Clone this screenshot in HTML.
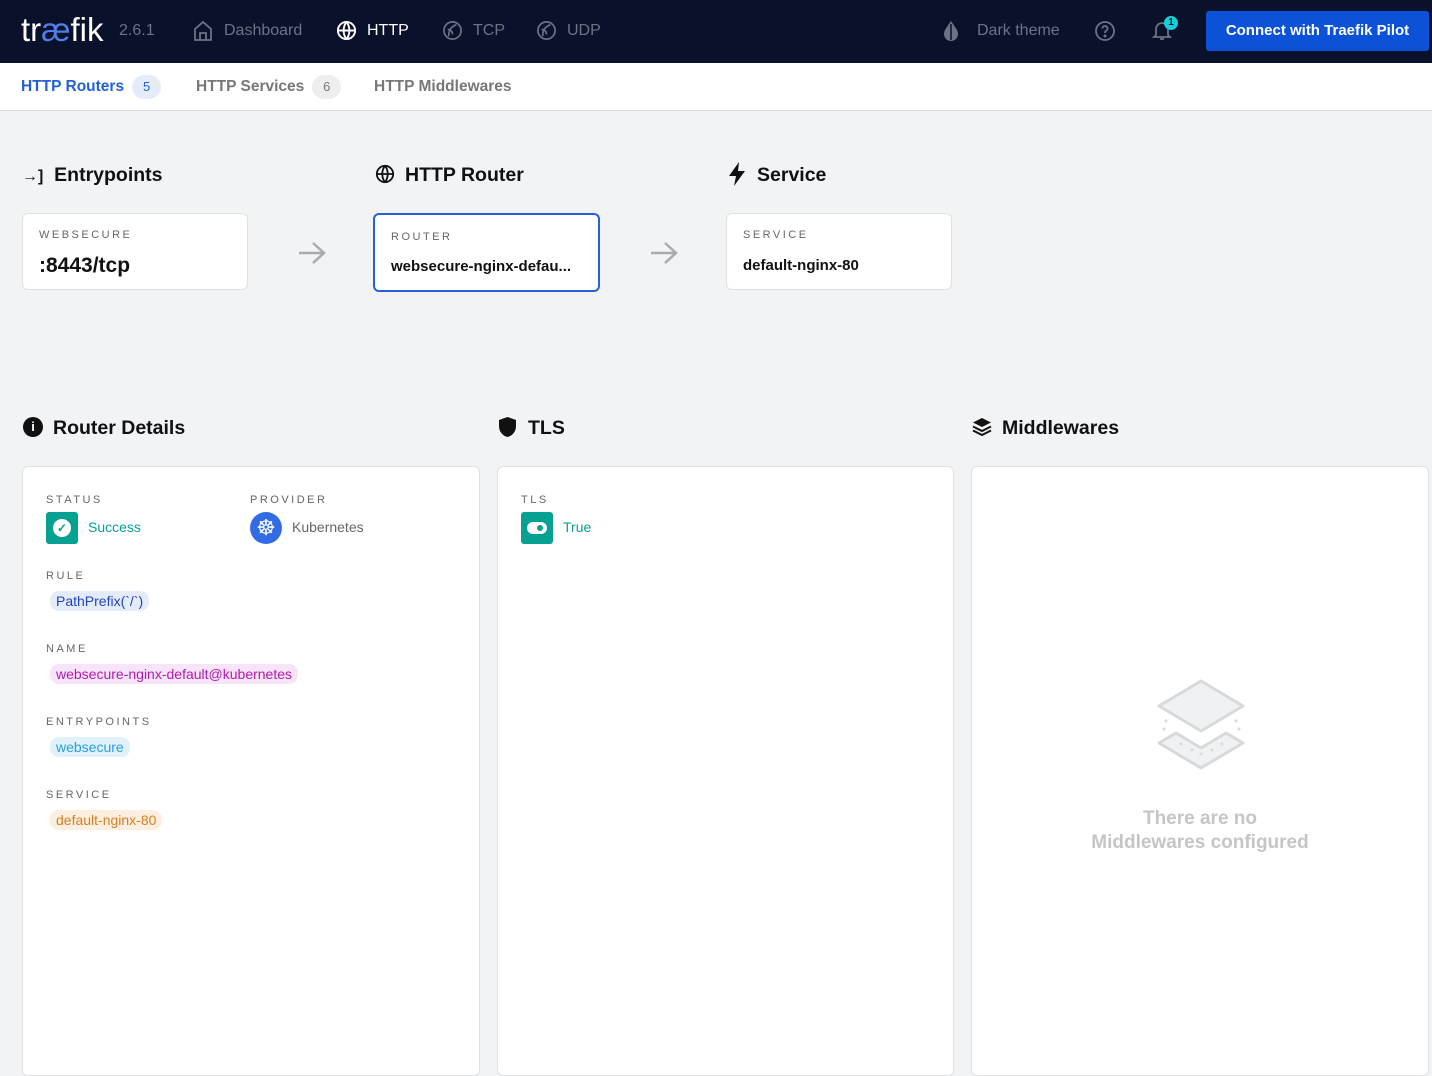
<!DOCTYPE html><html><head><meta charset="utf-8"><style>
*{box-sizing:border-box;margin:0;padding:0}
body{width:1432px;height:1067px;overflow:hidden;background:#f2f3f5;font-family:"Liberation Sans",sans-serif;position:relative;color:#111}
.nav{position:absolute;left:0;top:0;width:1432px;height:63px;background:#0a112b}
.a{position:absolute;white-space:nowrap}
.nv{color:#6d7286;font-size:16px;top:22px}
.sub{position:absolute;top:63px;left:0;width:1432px;height:48px;background:#fff;border-bottom:1px solid #d9dadd}
.badge{display:inline-block;width:29px;height:24px;border-radius:12px;text-align:center;line-height:24px;font-size:13px;margin-left:8px}
.h{font-size:19.5px;font-weight:bold;color:#111}
.card{position:absolute;background:#fff;border:1px solid #e0e1e4;border-radius:6px}
.lbl{font-size:11px;letter-spacing:2.5px;color:#666}
.chip{display:inline-block;padding:2px 6px;border-radius:9px;font-size:14px}
</style></head><body>
<div class="nav">
<div class="a" style="left:21px;top:11px;font-size:33px;color:#fff">tr<span style="color:#4f7ee8">æ</span>fik</div>
<div class="a nv" style="left:119px">2.6.1</div>
<svg class="a" style="left:193px;top:20px" width="20" height="21" viewBox="0 0 20 21" fill="none" stroke="#6d7286" stroke-width="1.8"><path d="M2 9L10 2l8 7v11H2z M7 20v-7h6v7"/></svg>
<div class="a nv" style="left:224px">Dashboard</div>
<svg class="a" style="left:336px;top:20px" width="21" height="21" viewBox="0 0 22 22" fill="none" stroke="#fff" stroke-width="2"><circle cx="11" cy="11" r="9"/><path d="M2 11h18M11 2c-4 5-4 13 0 18M11 2c4 5 4 13 0 18"/></svg>
<div class="a nv" style="left:367px;color:#fff">HTTP</div>
<svg class="a" style="left:442px;top:20px" width="21" height="21" viewBox="0 0 22 22" fill="none" stroke="#6d7286" stroke-width="1.8"><circle cx="11" cy="11" r="9"/><path d="M7 17c0-6 2-10 8-12M6 10c3 0 5 2 5 5"/></svg>
<div class="a nv" style="left:473px">TCP</div>
<svg class="a" style="left:536px;top:20px" width="21" height="21" viewBox="0 0 22 22" fill="none" stroke="#6d7286" stroke-width="1.8"><circle cx="11" cy="11" r="9"/><path d="M7 17c0-6 2-10 8-12M6 10c3 0 5 2 5 5"/></svg>
<div class="a nv" style="left:567px">UDP</div>
<svg class="a" style="left:941px;top:20px" width="20" height="22" viewBox="0 0 20 22"><path d="M10 1C6 7 3 10 3 14a7 7 0 0 0 14 0c0-4-3-7-7-13z" fill="#6d7286"/><path d="M10 4v16" stroke="#0a112b" stroke-width="1.5"/></svg>
<div class="a nv" style="left:977px">Dark theme</div>
<svg class="a" style="left:1094px;top:20px" width="22" height="22" viewBox="0 0 22 22" fill="none" stroke="#6d7286" stroke-width="1.8"><circle cx="11" cy="11" r="9"/><path d="M8.5 8.5a2.5 2.5 0 1 1 3.5 2.3c-1 .5-1 1-1 2.2"/><circle cx="11" cy="16" r=".6" fill="#6d7286"/></svg>
<svg class="a" style="left:1152px;top:19px" width="20" height="22" viewBox="0 0 20 22" fill="none" stroke="#6d7286" stroke-width="1.8"><path d="M4 16V10a6 6 0 0 1 12 0v6l2 2H2z M8 20h4"/></svg>
<div class="a" style="left:1164px;top:16px;width:14px;height:14px;border-radius:7px;background:#13d1d6;color:#0a112b;font-size:10px;font-weight:bold;text-align:center;line-height:14px">1</div>
<div class="a" style="left:1206px;top:11px;width:223px;height:40px;background:#0b52d9;border-radius:3px;color:#fff;font-weight:bold;font-size:15px;text-align:center;line-height:40px">Connect with Traefik Pilot</div>
</div>
<div class="sub">
<div class="a" style="left:21px;top:12px;font-size:15.5px;color:#2160d6;font-weight:bold">HTTP Routers<span class="badge" style="background:#e4ebf9;color:#2160d6;font-weight:normal">5</span></div>
<div class="a" style="left:196px;top:12px;font-size:15.5px;color:#777;font-weight:bold">HTTP Services<span class="badge" style="background:#eee;color:#777;font-weight:normal">6</span></div>
<div class="a" style="left:374px;top:15px;font-size:15.5px;color:#777;font-weight:bold">HTTP Middlewares</div>
</div>
<div class="a h" style="left:22px;top:164px"><span style="font-size:16px">→]</span>&nbsp; Entrypoints</div>
<svg class="a" style="left:375px;top:164px" width="20" height="20" viewBox="0 0 22 22" fill="none" stroke="#111" stroke-width="2"><circle cx="11" cy="11" r="9"/><path d="M2 11h18M11 2c-4 5-4 13 0 18M11 2c4 5 4 13 0 18"/></svg>
<div class="a h" style="left:405px;top:164px">HTTP Router</div>
<svg class="a" style="left:728px;top:162px" width="18" height="24" viewBox="0 0 18 24"><path d="M11 0L1 14h7l-2 10 11-15h-7z" fill="#111"/></svg>
<div class="a h" style="left:757px;top:164px">Service</div>
<div class="card" style="left:22px;top:213px;width:226px;height:77px"><div class="a lbl" style="left:16px;top:15px">WEBSECURE</div><div class="a" style="left:16px;top:40px;font-size:21px;font-weight:bold">:8443/tcp</div></div>
<svg class="a" style="left:298px;top:241px" width="28" height="24" viewBox="0 0 28 24" fill="none" stroke="#aaa" stroke-width="2.5"><path d="M1 12h25M15 2l11 10-11 10"/></svg>
<div class="card" style="left:373px;top:213px;width:227px;height:79px;border:2px solid #2b5fd9"><div class="a lbl" style="left:16px;top:16px">ROUTER</div><div class="a" style="left:16px;top:43px;font-size:15px;font-weight:bold">websecure-nginx-defau...</div></div>
<svg class="a" style="left:650px;top:241px" width="28" height="24" viewBox="0 0 28 24" fill="none" stroke="#aaa" stroke-width="2.5"><path d="M1 12h25M15 2l11 10-11 10"/></svg>
<div class="card" style="left:726px;top:213px;width:226px;height:77px"><div class="a lbl" style="left:16px;top:15px">SERVICE</div><div class="a" style="left:16px;top:43px;font-size:15px;font-weight:bold">default-nginx-80</div></div>

<div class="a" style="left:23px;top:417px;width:20px;height:20px;border-radius:10px;background:#111;color:#fff;font-size:13px;font-weight:bold;text-align:center;line-height:20px">i</div>
<div class="a h" style="left:53px;top:417px">Router Details</div>
<svg class="a" style="left:498px;top:416px" width="19" height="22" viewBox="0 0 19 22"><path d="M9.5 1L1 4v6c0 6 4 10 8.5 11 4.5-1 8.5-5 8.5-11V4z" fill="#111"/></svg>
<div class="a h" style="left:528px;top:417px">TLS</div>
<svg class="a" style="left:972px;top:417px" width="20" height="19" viewBox="0 0 20 19"><path d="M10 1L1 5.5 10 10l9-4.5z" fill="#111"/><path d="M1 9.5L10 14l9-4.5M1 13.5L10 18l9-4.5" fill="none" stroke="#111" stroke-width="2"/></svg>
<div class="a h" style="left:1002px;top:417px">Middlewares</div>

<div class="card" style="left:22px;top:466px;width:458px;height:610px">
<div class="a lbl" style="left:23px;top:27px">STATUS</div>
<div class="a" style="left:23px;top:45px;width:32px;height:32px;border-radius:3px;background:#06a190"><div style="position:absolute;left:7px;top:7px;width:18px;height:18px;border-radius:9px;background:#fff;color:#06a190;font-size:12px;text-align:center;line-height:18px;font-weight:bold">✓</div></div>
<div class="a" style="left:65px;top:52px;font-size:14px;color:#06a190">Success</div>
<div class="a lbl" style="left:227px;top:27px">PROVIDER</div>
<div class="a" style="left:227px;top:45px;width:32px;height:32px;border-radius:16px;background:#326ce5;color:#fff;font-size:22px;text-align:center;line-height:32px">☸</div>
<div class="a" style="left:269px;top:52px;font-size:14px;color:#666">Kubernetes</div>
<div class="a lbl" style="left:23px;top:103px">RULE</div>
<div class="a chip" style="left:27px;top:124px;background:#e4ebf9;color:#2143c5">PathPrefix(`/`)</div>
<div class="a lbl" style="left:23px;top:176px">NAME</div>
<div class="a chip" style="left:27px;top:197px;background:#f8e4f8;color:#b21ab2">websecure-nginx-default@kubernetes</div>
<div class="a lbl" style="left:23px;top:249px">ENTRYPOINTS</div>
<div class="a chip" style="left:27px;top:270px;background:#e0f1fa;color:#2a9ee0">websecure</div>
<div class="a lbl" style="left:23px;top:322px">SERVICE</div>
<div class="a chip" style="left:27px;top:343px;background:#fcefdf;color:#d77f21">default-nginx-80</div>
</div>
<div class="card" style="left:497px;top:466px;width:457px;height:610px">
<div class="a lbl" style="left:23px;top:27px">TLS</div>
<div class="a" style="left:23px;top:45px;width:32px;height:32px;border-radius:3px;background:#06a190"><div style="position:absolute;left:6px;top:10px;width:20px;height:12px;border-radius:6px;background:#fff"><div style="position:absolute;left:10px;top:3px;width:6px;height:6px;border-radius:3px;background:#06a190"></div></div></div>
<div class="a" style="left:65px;top:52px;font-size:14px;color:#06a190">True</div>
</div>
<div class="card" style="left:971px;top:466px;width:458px;height:610px">
<svg class="a" style="left:184px;top:212px" width="90" height="98" viewBox="0 0 90 98" fill="#f0f1f3" stroke="#d8d9db" stroke-width="3" stroke-linejoin="round"><path d="M45 2L87 27 45 52 3 27z"/><path d="M20 54L3 64 45 89 87 64 70 54 45 69z"/><g fill="#d8d9db" stroke="none"><circle cx="8" cy="50" r="1.5"/><circle cx="14" cy="58" r="1.5"/><circle cx="25" cy="65" r="1.5"/><circle cx="36" cy="71" r="1.5"/><circle cx="45" cy="75" r="1.5"/><circle cx="56" cy="71" r="1.5"/><circle cx="66" cy="65" r="1.5"/><circle cx="77" cy="58" r="1.5"/><circle cx="83" cy="50" r="1.5"/><circle cx="10" cy="42" r="1.5"/><circle cx="80" cy="42" r="1.5"/></g></svg>
<div class="a" style="left:0;top:340px;width:456px;text-align:center;font-size:19px;color:#c4c5c7;font-weight:bold;line-height:24px">There are no<br>Middlewares configured</div>
</div>
</body></html>
